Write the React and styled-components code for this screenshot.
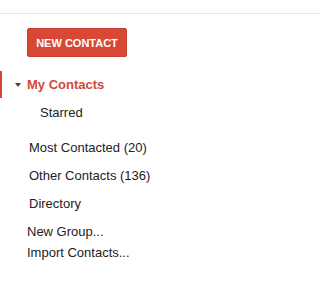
import React from 'react';
import styled, { createGlobalStyle } from 'styled-components';

const GlobalStyle = createGlobalStyle`
    body {
        margin: 0;
        background: #fff;
        font-family: Arial, "Liberation Sans", sans-serif;
    }
`;

const TopBar = styled.div`
    height: 13px;
    border-bottom: 1px solid #e5e5e5;
`;

const Sidebar = styled.nav`
    display: flex;
    flex-direction: column;
    padding-top: 14px;
`;

const NewButton = styled.button`
    align-self: flex-start;
    margin-left: 27px;
    width: 100px;
    height: 29px;
    border: 1px solid #c6402f;
    border-radius: 2px;
    background: #d94834;
    color: #fff;
    font-family: Arial, "Liberation Sans", sans-serif;
    font-size: 11px;
    font-weight: bold;
    padding: 0;
`;

const GroupList = styled.ul`
    list-style: none;
    margin: 14px 0 0;
    padding: 0;
`;

const Item = styled.li`
    display: flex;
    align-items: center;
    height: ${p => p.$h || 28}px;
    padding-left: ${p => p.$indent}px;
    border-left: 2px solid ${p => (p.$active ? '#d14836' : 'transparent')};
    color: ${p => (p.$active ? '#d14836' : '#222')};
    font-size: 13px;
    font-weight: ${p => (p.$active ? 'bold' : 'normal')};
`;

const Caret = styled.span`
    width: 0;
    height: 0;
    margin-right: 6px;
    border-left: 3.5px solid transparent;
    border-right: 3.5px solid transparent;
    border-top: 4px solid #444;
`;

const Spacer = styled.li`
    height: 7px;
`;

const ActionList = styled.ul`
    list-style: none;
    margin: 4px 0 0;
    padding: 0 0 0 27px;
`;

const Action = styled.li`
    height: 21px;
    display: flex;
    align-items: center;
    color: #222;
    font-size: 13px;
`;

export default function App() {
    return (
        <>
            <GlobalStyle />
            <TopBar />
            <Sidebar>
                <NewButton>NEW CONTACT</NewButton>
                <GroupList>
                    <Item $active $indent={13} $h={27}>
                        <Caret />
                        My Contacts
                    </Item>
                    <Item $indent={38}>Starred</Item>
                    <Spacer />
                    <Item $indent={27}>Most Contacted (20)</Item>
                    <Item $indent={27}>Other Contacts (136)</Item>
                    <Item $indent={27}>Directory</Item>
                </GroupList>
                <ActionList>
                    <Action>New Group...</Action>
                    <Action>Import Contacts...</Action>
                </ActionList>
            </Sidebar>
        </>
    );
}
